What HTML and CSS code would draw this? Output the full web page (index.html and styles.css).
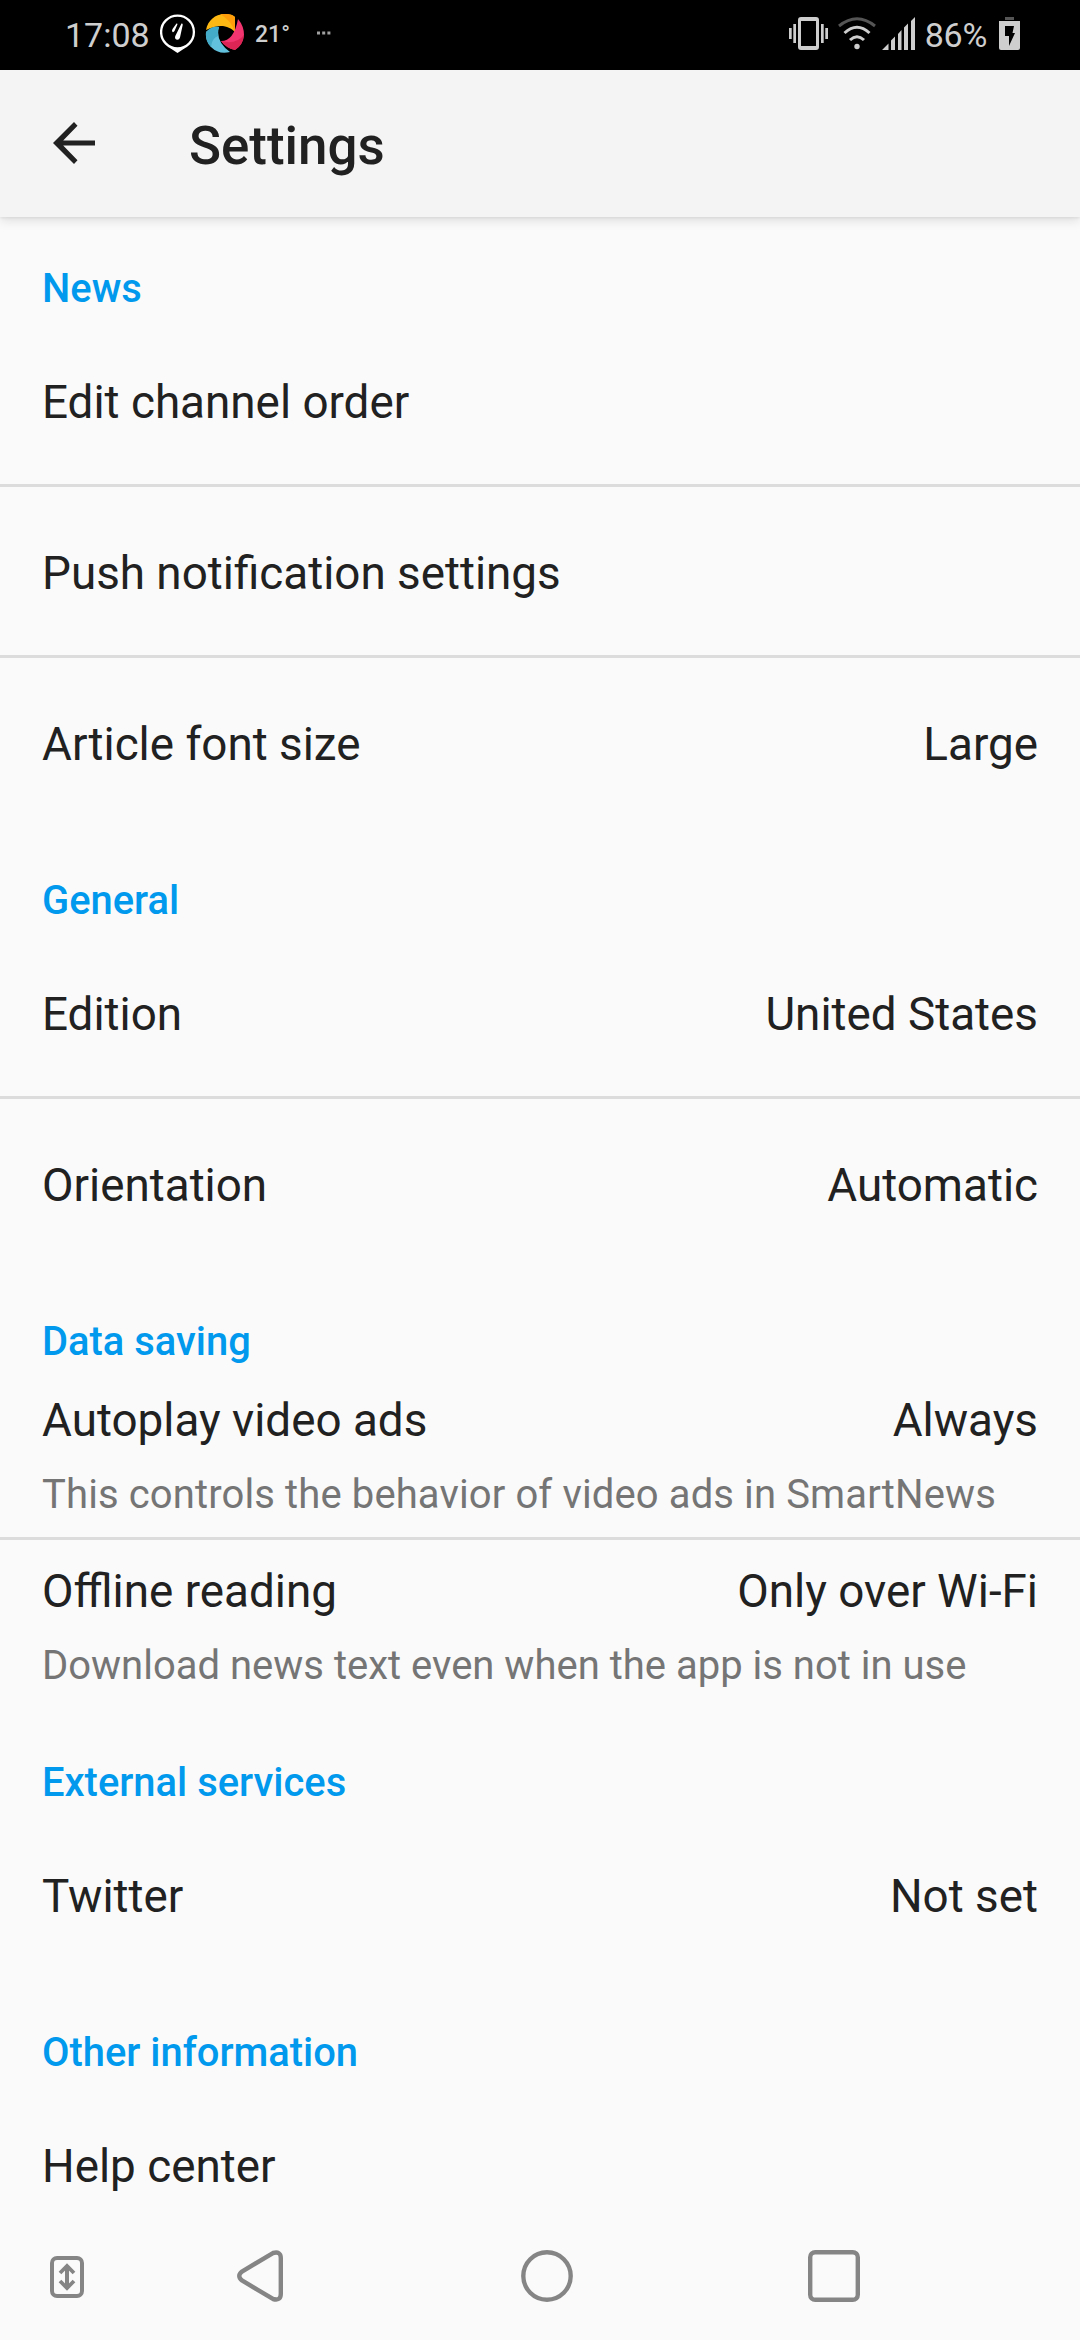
FILE: index.html
```html
<!DOCTYPE html>
<html lang="en">
<head>
<meta charset="utf-8">
<title>Settings</title>
<link rel="stylesheet" href="styles.css">
</head>
<body>
<div class="screen">
  <div class="statusbar">
    <span class="clock">17:08</span>
    <svg class="pin" width="36" height="40" viewBox="0 0 36 40"><circle cx="17.5" cy="18" r="16.4" fill="none" stroke="#fff" stroke-width="2.3"/><path d="M8.500 33Q17.500 36 26.500 33L17.500 39Z" fill="#fff"/><path d="M17 25.800Q14.300 25 15.300 22L21.500 9.500Q23 9 22.700 11L20 23.500Q19.300 26 17 25.800ZM12.500 18Q11.500 17 12.500 15L16.500 9.500Q17.600 9 17.400 10.500L14.500 17Q13.500 18.500 12.500 18Z" fill="#fff"/></svg>
    <svg class="swirl" width="40" height="40" viewBox="0 0 40 40"><path d="M1 16C3 5 12-.5 21 0Q27 0 30 3V18C24 12 15 9 1 16Z" fill="#fdb813"/><path d="M15 0Q26-1 30 3V18Q26 6 15 0Z" fill="#ff9d0a"/><path d="M33 5Q39 12 39 21Q38 31 30 36Q21 34 16 27Q29 27 33 5Z" fill="#f2346f"/><path d="M39 21Q38 31 30 36Q21 34 16 27Q31 31 39 21Z" fill="#dc2455"/><path d="M1 18Q7 12 14 13Q10 27 25 38Q14 41 6 33Q0 27 1 18Z" fill="#62c2dd"/><path d="M1 18Q7 12 14 13Q12 17 13 22Q7 24 6 33Q0 27 1 18Z" fill="#43aac8"/></svg>
    <span class="temp">21°</span>
    <svg class="more" width="14" height="4" viewBox="0 0 14 4" fill="#a0a0a0"><rect x="0" y="0.500" width="3" height="3"/><rect x="5.200" y="0.500" width="3" height="3"/><rect x="10.400" y="0.500" width="3" height="3"/></svg>
    <div class="system">
      <svg class="vibrate" width="39" height="34" viewBox="0 0 39 34" fill="#cecece"><path fill-rule="evenodd" d="M12 0H27Q30 0 30 3V30Q30 33 27 33H12Q9 33 9 30V3Q9 0 12 0ZM12 4V29H27V4Z"/><path d="M0 11H2.700V22H0ZM4.300 7H7V26H4.300ZM32 7H34.700V26H32ZM36.300 11H39V22H36.300Z"/></svg>
      <svg class="wifi" width="38" height="33" viewBox="0 0 38 33" fill="none" stroke="#cecece" stroke-width="3"><path d="M1 9Q19-5.500 37 9" stroke="#555"/><path d="M6.500 16Q19 4.500 31.500 16M12 23Q19 16.500 26 23"/><circle cx="19" cy="29.500" r="2.700" fill="#cecece" stroke="none"/></svg>
      <svg class="signal" width="33" height="33" viewBox="0 0 33 33" fill="#cecece"><path d="M0 33L6.500 26.500V33ZM9 33V23.500L13 19.500V33ZM16 33V17L19.500 13V33ZM22 33V10.500L26 6.500V33ZM29 33V4L33 0V33Z"/></svg>
      <span class="percent">86%</span>
      <svg class="battery" width="21" height="33" viewBox="0 0 21 33"><path d="M6 0H15V3H6Z" fill="#555"/><path d="M0 4H21V31Q21 33 19 33H2Q0 33 0 31Z" fill="#cecece"/><path d="M6 9H15L13.500 16H16L10 29V19H6Z" fill="#000"/></svg>
    </div>
  </div>
  <header class="appbar">
    <svg class="back" width="42" height="42" viewBox="0 0 42 42" fill="#212121"><path d="M42 18.400H10.200L24.500 3.700L21 0L0 21L21 42L24.500 38.300L10.200 23.600H42Z"/></svg>
    <h1 class="title">Settings</h1>
  </header>
  <main class="list">
    <section>
      <h2 class="heading">News</h2>
      <div class="row"><div class="line"><span>Edit channel order</span></div></div>
      <div class="row"><div class="line"><span>Push notification settings</span></div></div>
      <div class="row"><div class="line"><span>Article font size</span><span>Large</span></div></div>
    </section>
    <section>
      <h2 class="heading">General</h2>
      <div class="row"><div class="line"><span>Edition</span><span>United States</span></div></div>
      <div class="row"><div class="line"><span>Orientation</span><span>Automatic</span></div></div>
    </section>
    <section>
      <h2 class="heading">Data saving</h2>
      <div class="row detailed"><div class="line"><span>Autoplay video ads</span><span>Always</span></div><p class="note wide">This controls the behavior of video ads in SmartNews</p></div>
      <div class="row detailed"><div class="line"><span>Offline reading</span><span>Only over Wi-Fi</span></div><p class="note">Download news text even when the app is not in use</p></div>
    </section>
    <section>
      <h2 class="heading">External services</h2>
      <div class="row"><div class="line"><span>Twitter</span><span>Not set</span></div></div>
    </section>
    <section>
      <h2 class="heading">Other information</h2>
      <div class="row"><div class="line"><span>Help center</span></div></div>
    </section>
  </main>
  <nav class="navbar">
    <svg class="toggle" width="34" height="42" viewBox="0 0 34 42" fill="none" stroke="#858585"><rect x="2" y="2" width="30" height="38" rx="5" stroke-width="4"/><path d="M17 11V31" stroke-width="4"/><path d="M10 17L17 10L24 17M10 25L17 32L24 25" stroke-width="3.800"/></svg>
    <svg class="prev" width="46" height="52" viewBox="0 0 46 52" fill="none" stroke="#858585" stroke-width="4.400"><path d="M36 3Q43.800 1 43.800 8V44Q43.800 51 36 49L5 30.500Q-0.500 26 5 21.500Z"/></svg>
    <svg class="home" width="52" height="52" viewBox="0 0 52 52"><circle cx="26" cy="26" r="23.700" fill="none" stroke="#858585" stroke-width="4.400"/></svg>
    <svg class="recent" width="52" height="52" viewBox="0 0 52 52"><rect x="2.200" y="2.200" width="47.600" height="47.600" rx="5" fill="none" stroke="#858585" stroke-width="4.400"/></svg>
  </nav>
</div>
</body>
</html>
```
FILE: styles.css
```css
* { box-sizing: border-box; }
body { margin: 0; background: #fafafa; }
.screen {
  display: flex;
  flex-direction: column;
  width: 1080px;
  height: 2340px;
  overflow: hidden;
  font-family: Roboto, sans-serif;
  color: #212121;
}
.statusbar {
  display: flex;
  align-items: flex-start;
  flex: none;
  height: 70px;
  padding-left: 65px;
  background: #000;
  color: #cecece;
}
.clock, .percent { font-size: 34px; line-height: 70px; }
.clock { width: 95px; }
.percent { letter-spacing: -0.3px; }
.pin { margin-top: 14px; }
.swirl { margin: 14px 0 0 9px; }
.temp { width: 35px; margin-left: 10px; font-size: 23px; font-weight: 500; line-height: 69px; }
.more { margin: 31px 0 0 27px; }
.system { display: flex; margin-left: auto; padding-right: 60px; }
.vibrate { margin-top: 17px; }
.wifi { margin: 17px 0 0 10px; }
.signal { margin: 17px 10px 0 6px; }
.battery { margin: 17px 0 0 12px; }
.appbar {
  display: flex;
  flex: none;
  align-items: center;
  height: 147px;
  padding-left: 53px;
  background: #f4f4f4;
  box-shadow: 0 4px 10px rgba(0, 0, 0, 0.1), 0 1px 3px rgba(0, 0, 0, 0.08);
}
.back { margin-bottom: 1px; }
.title { margin: 5px 0 0 94px; font-size: 52.900px; font-weight: 500; line-height: 62px; }
.list { flex: 1; min-height: 0; }
.heading {
  margin: 0;
  height: 99px;
  padding: 47px 42px 0;
  font-size: 39.900px;
  font-weight: 500;
  line-height: 50px;
  color: #0099ee;
}
.row {
  display: flex;
  flex-direction: column;
  justify-content: center;
  height: 171px;
  padding: 6px 42px 0;
  border-bottom: 3px solid #dcdcdc;
}
.row:last-child { border-bottom-color: transparent; }
.detailed { padding-top: 7px; }
.line { display: flex; justify-content: space-between; font-size: 45.800px; line-height: 54px; }
.note { margin: 23px 0 0; font-size: 40px; line-height: 48px; color: #757575; white-space: nowrap; }
.wide { letter-spacing: 0.12px; }
.navbar {
  display: flex;
  flex: none;
  align-items: center;
  height: 130px;
  padding: 2px 0 0 50px;
}
.toggle { margin-top: 2px; }
.prev { margin-left: 153px; }
.home { margin-left: 237.500px; }
.recent { margin-left: 235.500px; }
```
